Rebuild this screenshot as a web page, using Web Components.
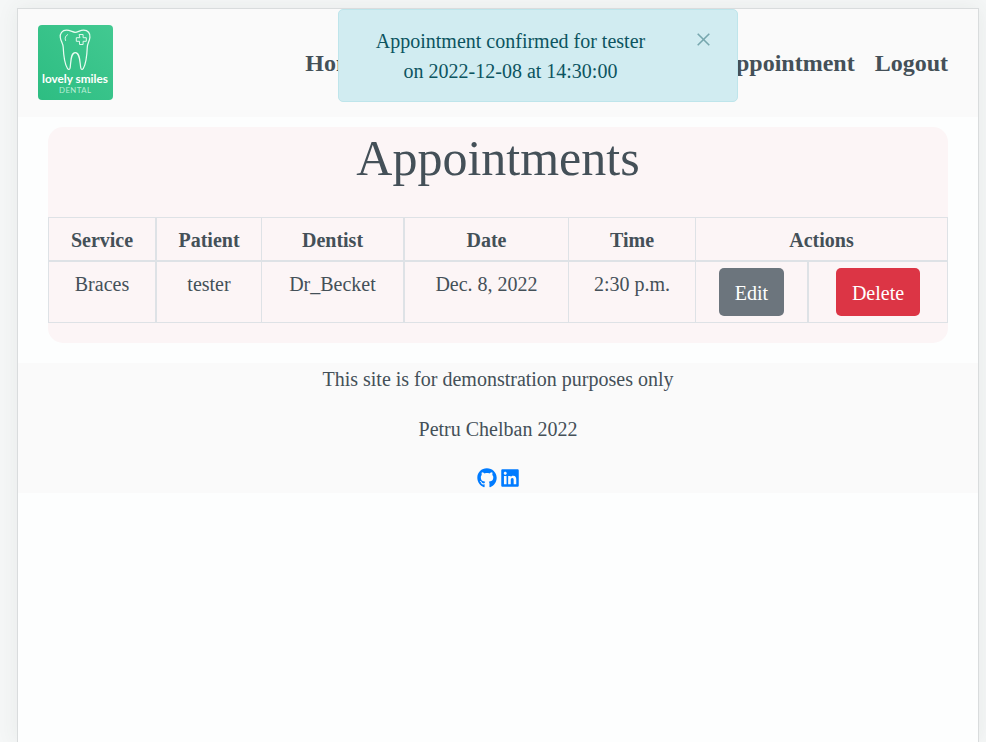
<!DOCTYPE html>
<html lang="en">
<head>
<meta charset="utf-8">
<title>Lovely Smiles Dental</title>
<style>
html,body{margin:0;height:100%;overflow:hidden}
body{background:#f5f7f7;color:#445058;font:20px/30px "Liberation Serif","Times New Roman",serif}
</style>
</head>
<body>
<dental-page>
  <site-header slot="header"></site-header>
  <appointments-panel></appointments-panel>
  <site-footer slot="footer"></site-footer>
  <toast-message slot="toast">Appointment confirmed for tester<br>on 2022-12-08 at 14:30:00</toast-message>
</dental-page>
<script>
const define = (name, html) => customElements.define(name, class extends HTMLElement {
  constructor() {
    super();
    this.attachShadow({mode: 'open'}).innerHTML = html;
  }
});

define('dental-page', `<style>
:host{display:block;box-sizing:border-box;height:100vh;padding:8px 7px 0 17px}
.sheet{position:relative;box-sizing:border-box;height:100%;border:1px solid #d9dcdd;border-bottom:0;background:#fdfefe;box-shadow:0 0 20px rgba(60,75,70,.08)}
main{padding:10px 30px 20px}
</style><div class="sheet"><slot name="header"></slot><main><slot></slot></main><slot name="footer"></slot><slot name="toast"></slot></div>`);

define('clinic-logo', `<style>
:host{display:block;width:75px;height:75px}
svg{display:block;border-radius:4px}
</style><svg width="75" height="75" viewBox="0 0 75 75">
<defs><linearGradient id="g" x1="0" y1="1" x2="1" y2="0"><stop stop-color="#2dbd82"/><stop offset="1" stop-color="#42c991"/></linearGradient></defs>
<rect width="75" height="75" fill="url(#g)"/>
<g fill="none" stroke="#e9fbf1" stroke-width="1.25" stroke-linejoin="round" stroke-linecap="round">
<path d="M37 7.300C34.500 7 32 5.200 28.500 5.200C24 5.200 21.800 8.300 22.300 12.500C22.700 16 25 18.500 25.200 22C25.500 29 26 38 29.500 43.500C30.500 45 31.800 44.700 32.100 43C33 38 32.300 27.500 37.300 27.500C42.300 27.500 41.800 38 42.800 43C43.100 44.700 44.400 45 45.300 43.500C48.500 38 49 29 49.300 22C49.500 18.500 51.500 16 51.900 12.500C52.400 8.300 50 5.200 45.600 5.200C42 5.200 39.500 7.500 37 7.300Z"/>
<path d="M27.500 15.500C26.500 13 27.500 10.600 29.700 9.600" stroke-width=".9"/>
<path d="M41.500 9.500h3.600v3.200h3.200v3.600h-3.200v3.200h-3.600v-3.200h-3.200v-3.600h3.200z" stroke-width=".95"/>
</g>
<text x="37" y="58" text-anchor="middle" textLength="66" lengthAdjust="spacingAndGlyphs" font-family="Lato,sans-serif" font-weight="700" font-size="12" fill="#fff">lovely smiles</text>
<text x="37" y="68" text-anchor="middle" textLength="32" font-family="Lato,sans-serif" font-size="7.800" fill="#b9edd5">DENTAL</text>
</svg>`);

define('site-header', `<style>
:host{display:flex;align-items:center;justify-content:space-between;box-sizing:border-box;height:108px;padding:0 30px 1px 20px;background:#fafafa}
nav{display:flex;font-size:24px;font-weight:700}
span{margin-left:20px}
.booking{margin-left:352px}
</style><clinic-logo></clinic-logo><nav><span>Home</span><span class="booking">Appointment</span><span>Logout</span></nav>`);

define('action-button', `<style>
:host{display:block;box-sizing:border-box;height:48px;padding:9px 16px;border-radius:5px;background:#6c757d;color:#fff;line-height:32px}
:host([danger]){background:#dc3545}
</style><slot></slot>`);

define('appointments-panel', `<style>
:host{display:block;height:216px;border-radius:15px;background:#fcf5f6;overflow:hidden}
h1{margin:0 0 29px;padding-top:1px;font-size:50px;font-weight:400;line-height:60px;text-align:center}
.table{display:grid;grid-template-columns:108px 105px 143px 164px 127px 113px 139px;grid-template-rows:44px 61px;border:solid #dee2e6;border-width:1px 0 0 1px;text-align:center}
.table>*{box-sizing:border-box;border:0 solid #dee2e6;border-width:0 1px 1px 0;padding-top:7px}
.head{font-weight:700;border-bottom-width:2px}
.table>.wide{border-right-width:2px}
.table>.head{border-bottom-width:2px}
.all{grid-column:span 2}
.table>.action{display:flex;justify-content:center;align-items:flex-start;padding-top:6px}
</style><h1>Appointments</h1><div class="table">
<div class="head wide">Service</div><div class="head">Patient</div><div class="head wide">Dentist</div><div class="head">Date</div><div class="head">Time</div><div class="head all">Actions</div>
<div class="wide">Braces</div><div>tester</div><div class="wide">Dr_Becket</div><div>Dec. 8, 2022</div><div>2:30 p.m.</div>
<div class="action wide"><action-button>Edit</action-button></div><div class="action"><action-button danger>Delete</action-button></div></div>`);

define('site-footer', `<style>
:host{display:block;box-sizing:border-box;height:130px;padding-top:1px;background:#fafafa;text-align:center}
p{margin:0 0 20px;line-height:30px}
.social{display:flex;justify-content:center;gap:4px;padding-top:4px}
svg{display:block;fill:#007bff}
</style><p>This site is for demonstration purposes only</p><p>Petru Chelban 2022</p>
<div class="social">
<svg width="20" height="20" viewBox="0 0 496 512"><path d="M165.900 397.400c0 2-2.300 3.600-5.200 3.600-3.300.3-5.600-1.300-5.600-3.600 0-2 2.300-3.600 5.200-3.600 3-.3 5.600 1.300 5.600 3.600zM244.800 8C106.100 8 0 113.300 0 252c0 110.900 69.800 205.800 169.500 239.200 12.800 2.300 17.300-5.600 17.300-12.100 0-6.200-.3-40.400-.3-61.400 0 0-70 15-84.700-29.800 0 0-11.400-29.100-27.800-36.600 0 0-22.900-15.700 1.600-15.400 0 0 24.900 2 38.600 25.800 21.900 38.600 58.600 27.500 72.900 20.900 2.300-16 8.800-27.100 16-33.700-55.900-6.200-112.300-14.300-112.300-110.500 0-27.500 7.600-41.300 23.600-58.900-2.600-6.500-11.100-33.300 2.600-67.900 20.900-6.500 69 27 69 27 20-5.600 41.500-8.500 62.800-8.500s42.800 2.900 62.800 8.500c0 0 48.100-33.600 69-27 13.700 34.700 5.200 61.400 2.600 67.900 16 17.700 25.800 31.500 25.800 58.900 0 96.500-58.900 104.200-114.800 110.500 9.200 7.900 17 22.900 17 46.400 0 33.700-.3 75.400-.3 83.600 0 6.500 4.600 14.400 17.300 12.100C428.200 457.800 496 362.900 496 252 496 113.300 383.500 8 244.800 8z"/></svg>
<svg width="18" height="20" viewBox="0 0 448 512"><path d="M416 32H31.900C14.300 32 0 46.500 0 64.300v383.400C0 465.500 14.300 480 31.900 480H416c17.600 0 32-14.500 32-32.300V64.300c0-17.800-14.400-32.300-32-32.300zM135.400 416H69V202.200h66.500V416zm-33.200-243c-21.300 0-38.500-17.300-38.500-38.500S80.900 96 102.200 96c21.200 0 38.500 17.300 38.500 38.500 0 21.300-17.200 38.500-38.500 38.500zm282.100 243h-66.400V312c0-24.800-.5-56.700-34.500-56.700-34.600 0-39.900 27-39.900 54.900V416h-66.400V202.200h63.700v29.200h.9c8.900-16.800 30.600-34.500 62.900-34.500 67.200 0 79.700 44.300 79.700 101.900V416z"/></svg>
</div>`);

define('toast-message', `<style>
:host{position:absolute;top:0;left:320px;box-sizing:border-box;width:400px;height:93px;padding:16px 55px 0 0;border:1px solid #bee5eb;border-radius:5px;background:#d1ecf1;color:#0c5460;text-align:center}
svg{position:absolute;right:27px;top:23px}
</style><slot></slot><svg width="13" height="13" viewBox="0 0 13 13"><path d="M.7.700 12.300 12.300M12.300.7.700 12.300" stroke="#77a7ae" stroke-width="1.600"/></svg>`);
</script>
</body>
</html>
